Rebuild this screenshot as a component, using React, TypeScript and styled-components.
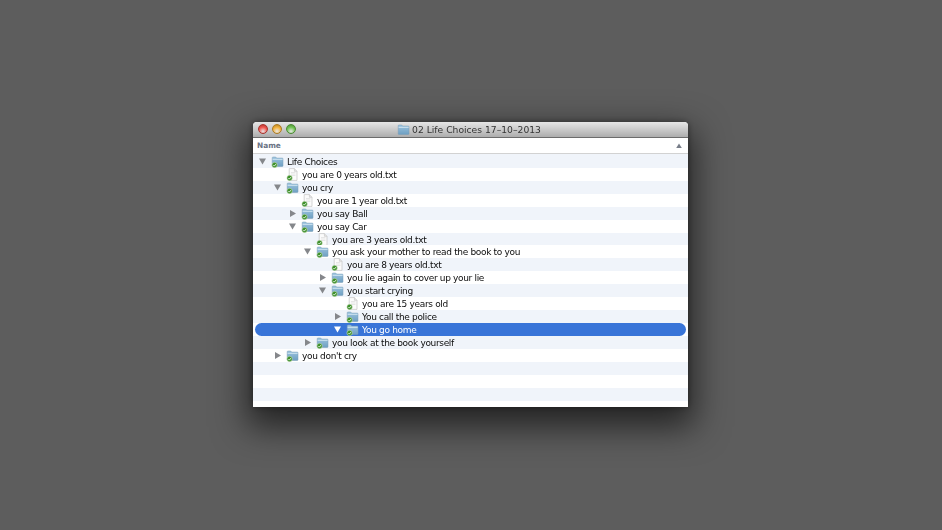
import React from "react";
import styled, { createGlobalStyle } from "styled-components";

const Global = createGlobalStyle`
  html, body { margin: 0; padding: 0; width: 942px; height: 530px; overflow: hidden; background: #5d5d5d; }
  #root { width: 942px; height: 530px; }
`;
const Stage = styled.div`
  width: 942px; height: 530px; display: flex; padding: 122px 0 0 253px; box-sizing: border-box;
  background: #5d5d5d; font-family: "DejaVu Sans", sans-serif;
`;
const Window = styled.div`
  width: 435px; height: 285px; display: flex; flex-direction: column; background: #fff; border-radius: 4px 4px 1px 1px;
  box-shadow: 0 14px 34px 6px rgba(0,0,0,.62), 0 0 6px rgba(0,0,0,.4); overflow: hidden; flex: none;
  filter: blur(.3px);
`;
const TitleBar = styled.div`
  height: 15px; flex: none; position: relative; display: flex; align-items: center; justify-content: center; gap: 2px; padding-right: 3px;
  background: linear-gradient(#e6e6e6, #c4c4c4 60%, #adadad); border-bottom: 1px solid #6c6c6c;
`;
const Lights = styled.div`position: absolute; left: 5px; top: 2px; display: flex; gap: 4px;`;
const Light = styled.span<{ $c: string; $d: string }>`
  width: 10px; height: 10px; box-sizing: border-box; border-radius: 50%; border: 1px solid ${p => p.$d};
  background: radial-gradient(circle at 50% 80%, #fff9 0, ${p => p.$c} 55%, ${p => p.$d} 100%);
`;
const Title = styled.span`font-size: 9.2px; color: #333; line-height: 15px;`;
const Header = styled.div`
  height: 16px; flex: none; display: flex; align-items: center; justify-content: space-between; padding: 0 6px 0 4px;
  border-bottom: 1px solid #d2d2d2; background: #fff; box-sizing: border-box;
`;
const HeaderLabel = styled.span`font: bold 7.4px "DejaVu Sans", sans-serif; color: #6a7384;`;
const List = styled.div`
  flex: 1; display: flex; flex-direction: column; overflow: hidden; padding: 1px 0 0;
  background: linear-gradient(#f0f4fa 1px, #fff 1px);
`;
const Row = styled.div<{ $alt: boolean; $selected?: boolean; $depth: number }>`
  height: 12.93px; flex: none; display: flex; align-items: center; position: relative; box-sizing: border-box;
  background: ${p => p.$alt ? "#f0f4fa" : "#fff"};
  padding-left: ${p => 4 + p.$depth * 15}px;
  color: ${p => p.$selected ? "#fff" : "#0c0c0c"};
  z-index: 0;
  ${p => p.$selected ? `&::before { content: ""; position: absolute; z-index: -1; left: 2px; right: 2px; top: 0; bottom: 0; border-radius: 7px; background: #3874d8; }` : ""}
`;
const Twisty = styled.span`width: 11px; height: 13px; flex: none; display: flex; align-items: center; justify-content: center; margin-right: 3px;`;
const IconBox = styled.span`width: 13px; height: 13px; flex: none; margin-right: 3px; display: flex;`;
const Label = styled.span`font-size: 9px; letter-spacing: -.33px; line-height: 13px; padding-top: 2px; white-space: nowrap;`;

function Arrow({ open, sel }: { open: boolean; sel?: boolean }) {
  const f = sel ? "#fff" : "#85878b";
  return (
    <svg width="9" height="9" viewBox="0 0 9 9">
      {open ? <polygon points="1,1.5 8,1.5 4.5,7.5" fill={f} /> : <polygon points="2,1 8,4.5 2,8" fill={f} />}
    </svg>
  );
}
function Badge() {
  return (
    <g>
      <circle cx="3.6" cy="10" r="2.7" fill="#3d8f2a" stroke="#dcebd0" strokeWidth=".5" />
      <path d="M2.4 10l1 1.1 1.5-2" fill="none" stroke="#fff" strokeWidth=".8" />
    </g>
  );
}
function Folder({ small = false }: { small?: boolean }) {
  return (
    <svg width="13" height="13" viewBox="0 0 13 13">
      <defs>
        <linearGradient id="fg" x1="0" y1="0" x2="0" y2="1">
          <stop offset="0" stopColor="#9cc4df" />
          <stop offset="1" stopColor="#6e9fc2" />
        </linearGradient>
      </defs>
      <path d="M1.2 2.8c0-.5.3-.8.7-.8h2.8l1 1.1h5.6c.4 0 .7.3.7.7v7c0 .4-.3.7-.7.7H1.9c-.4 0-.7-.3-.7-.7z" fill="url(#fg)" stroke="#7b9db4" strokeWidth=".5" />
      <rect x="1.6" y="3.8" width="10" height="1" fill="#d2e5f2" />
      {!small && <Badge />}
    </svg>
  );
}
function Doc() {
  return (
    <svg width="13" height="13" viewBox="0 0 13 13">
      <path d="M3.2.6h5.2l2.6 2.7v9.1H3.2z" fill="#fbfbfb" stroke="#bbb" strokeWidth=".6" />
      <path d="M8.4.6v2.7H11" fill="#e4e4e4" stroke="#bbb" strokeWidth=".5" />
      <path d="M5 4.5h4.4M5 6h4.4M5 7.5h4.4" stroke="#d0d0d0" strokeWidth=".5" />
      <Badge />
    </svg>
  );
}

type Item = { d: number; t: string; k: "open" | "closed" | "file"; sel?: boolean };
const items: Item[] = [
  { d: 0, t: "Life Choices", k: "open" },
  { d: 1, t: "you are 0 years old.txt", k: "file" },
  { d: 1, t: "you cry", k: "open" },
  { d: 2, t: "you are 1 year old.txt", k: "file" },
  { d: 2, t: "you say Ball", k: "closed" },
  { d: 2, t: "you say Car", k: "open" },
  { d: 3, t: "you are 3 years old.txt", k: "file" },
  { d: 3, t: "you ask your mother to read the book to you", k: "open" },
  { d: 4, t: "you are 8 years old.txt", k: "file" },
  { d: 4, t: "you lie again to cover up your lie", k: "closed" },
  { d: 4, t: "you start crying", k: "open" },
  { d: 5, t: "you are 15 years old", k: "file" },
  { d: 5, t: "You call the police", k: "closed" },
  { d: 5, t: "You go home", k: "open", sel: true },
  { d: 3, t: "you look at the book yourself", k: "closed" },
  { d: 1, t: "you don't cry", k: "closed" },
  { d: 0, t: "", k: "file" }, { d: 0, t: "", k: "file" }, { d: 0, t: "", k: "file" }, { d: 0, t: "", k: "file" },
];

export default function App() {
  return (
    <Stage>
      <Global />
      <Window>
        <TitleBar>
          <Lights>
            <Light $c="#f0564f" $d="#a8322c" />
            <Light $c="#f2b23c" $d="#ab7a20" />
            <Light $c="#72c454" $d="#4a8a32" />
          </Lights>
          <Folder small />
          <Title>02 Life Choices 17–10–2013</Title>
        </TitleBar>
        <Header>
          <HeaderLabel>Name</HeaderLabel>
          <svg width="6" height="6" viewBox="0 0 6 6"><polygon points="3,.5 5.8,5 .2,5" fill="#777d88" /></svg>
        </Header>
        <List>
          {items.map((it, i) => (
            <Row key={i} $alt={i % 2 === 0} $depth={it.d} $selected={it.sel}>
              {it.t && (
                <>
                  <Twisty>{it.k !== "file" && <Arrow open={it.k === "open"} sel={it.sel} />}</Twisty>
                  <IconBox>{it.k === "file" ? <Doc /> : <Folder />}</IconBox>
                  <Label>{it.t}</Label>
                </>
              )}
            </Row>
          ))}
        </List>
      </Window>
    </Stage>
  );
}
